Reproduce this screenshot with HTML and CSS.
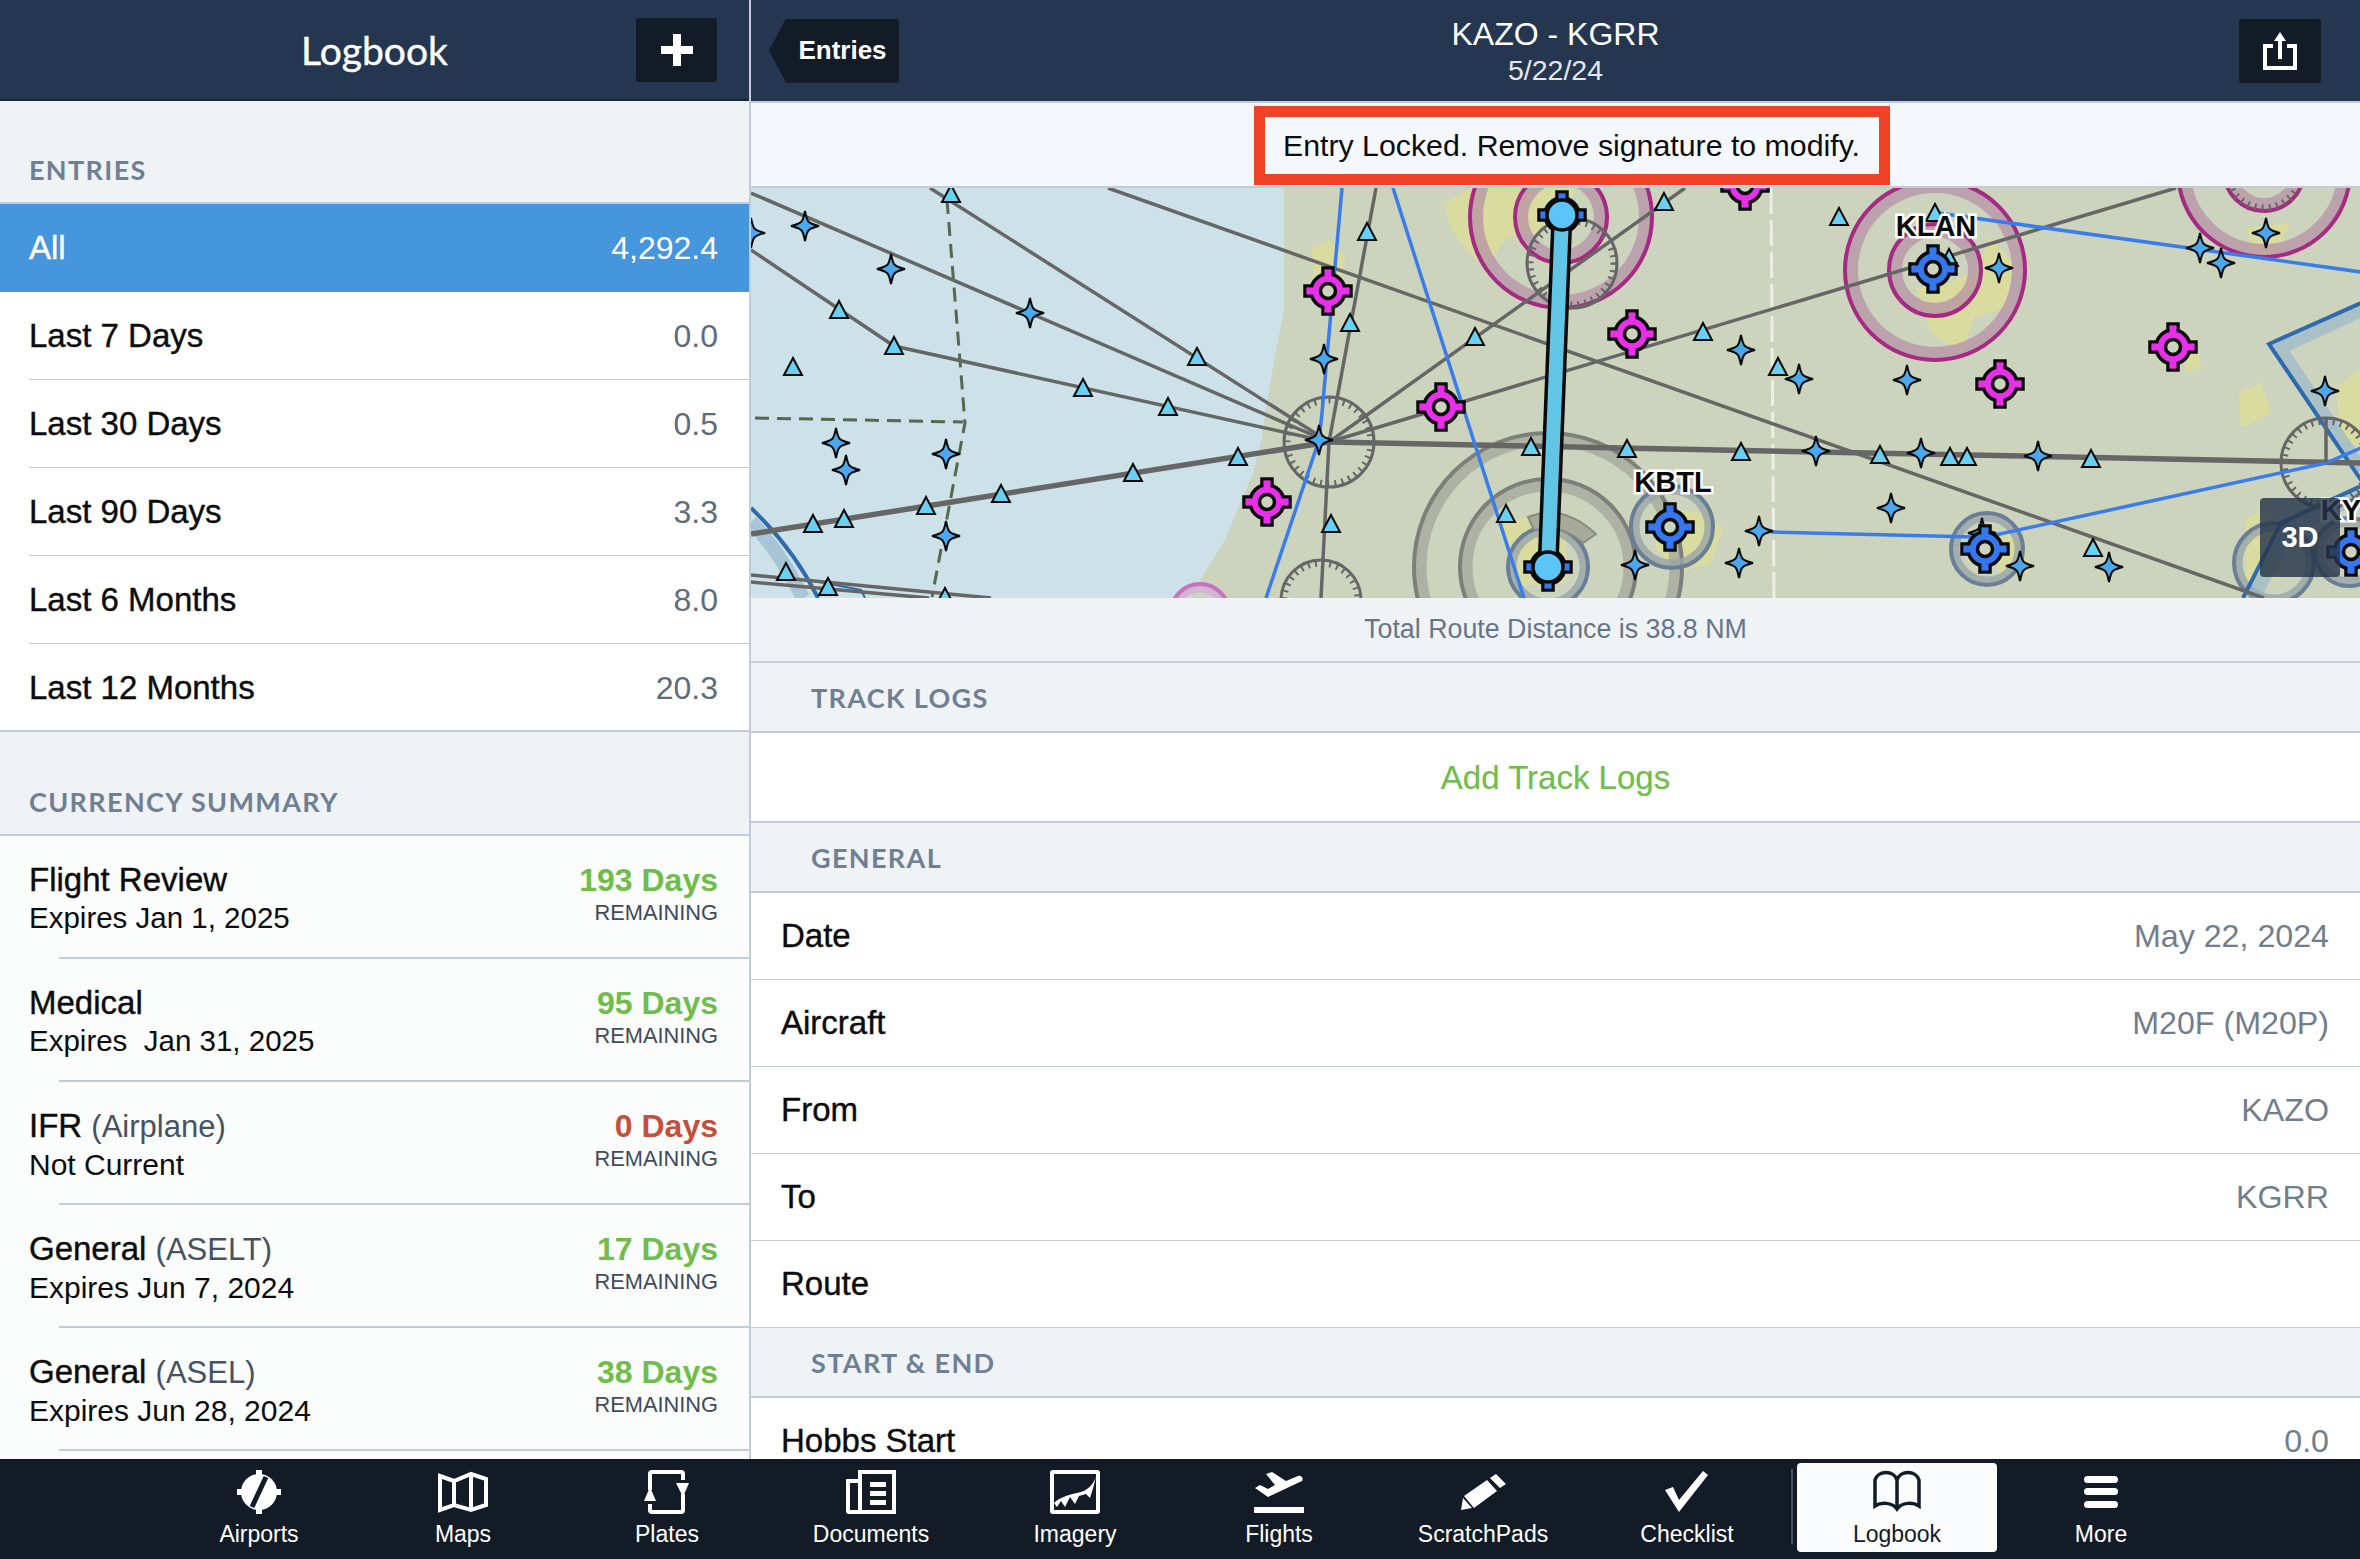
FILE: index.html
```html
<!DOCTYPE html>
<html lang="en">
<head>
  <meta charset="UTF-8">
  <title>Logbook</title>
  <link rel="stylesheet" href="styles.css">
</head>
<body>
<div class="app">
  <div class="main">

    <aside class="sidebar">
      <header class="side-head">
        <h1 class="side-title">Logbook</h1>
        <button class="nav-btn plus-btn">
          <svg width="32" height="32" viewBox="0 0 32 32"><path class="ico-fill" d="M12 0h8v12h12v8H20v12h-8V20H0v-8h12z"/></svg>
        </button>
      </header>
      <div class="side-scroll">
        <div class="section first-section">ENTRIES</div>
        <ul class="entries">
          <li class="entry selected"><span>All</span><span class="entry-val">4,292.4</span></li>
          <li class="entry"><span>Last 7 Days</span><span class="entry-val">0.0</span></li>
          <li class="entry"><span>Last 30 Days</span><span class="entry-val">0.5</span></li>
          <li class="entry"><span>Last 90 Days</span><span class="entry-val">3.3</span></li>
          <li class="entry"><span>Last 6 Months</span><span class="entry-val">8.0</span></li>
          <li class="entry"><span>Last 12 Months</span><span class="entry-val">20.3</span></li>
        </ul>
        <div class="section first-section second-section">CURRENCY SUMMARY</div>
        <ul class="currency">
          <li class="cur">
            <div><div class="cur-name">Flight Review</div><div class="cur-sub tight">Expires Jan 1, 2025</div></div>
            <div class="cur-right"><div class="days ok">193 Days</div><div class="remain">REMAINING</div></div>
          </li>
          <li class="cur">
            <div><div class="cur-name">Medical</div><div class="cur-sub tight">Expires&nbsp; Jan 31, 2025</div></div>
            <div class="cur-right"><div class="days ok">95 Days</div><div class="remain">REMAINING</div></div>
          </li>
          <li class="cur">
            <div><div class="cur-name">IFR <span class="cur-kind">(Airplane)</span></div><div class="cur-sub">Not Current</div></div>
            <div class="cur-right"><div class="days bad">0 Days</div><div class="remain">REMAINING</div></div>
          </li>
          <li class="cur">
            <div><div class="cur-name">General <span class="cur-kind">(ASELT)</span></div><div class="cur-sub">Expires Jun 7, 2024</div></div>
            <div class="cur-right"><div class="days ok">17 Days</div><div class="remain">REMAINING</div></div>
          </li>
          <li class="cur">
            <div><div class="cur-name">General <span class="cur-kind">(ASEL)</span></div><div class="cur-sub">Expires Jun 28, 2024</div></div>
            <div class="cur-right"><div class="days ok">38 Days</div><div class="remain">REMAINING</div></div>
          </li>
        </ul>
      </div>
    </aside>

    <section class="detail">
      <header class="detail-head">
        <div class="head-left"><button class="nav-btn back-btn">Entries</button></div>
        <div class="head-title">
          <div class="route-name">KAZO - KGRR</div>
          <div class="route-date">5/22/24</div>
        </div>
        <div class="head-right">
          <button class="nav-btn share-btn">
            <svg width="34" height="38" viewBox="0 0 34 38"><path class="ico-line" d="M10 14H2v22h30V14h-8"/><path class="ico-line" d="M17 6v21"/><path class="ico-fill" d="M17 0l6 9H11z"/></svg>
          </button>
        </div>
      </header>

      <div class="notice"><div class="notice-box">Entry Locked. Remove signature to modify.</div></div>

      <div class="map">
        <svg class="map-svg" width="1610" height="410" viewBox="0 0 1610 410">
          <defs>
            <path id="star" class="star" d="M0-15Q2-5 4-4Q6-2 14 0Q6 2 4 4Q2 5 0 15Q-2 5-4 4Q-6 2-14 0Q-6-2-4-4Q-2-5 0-15z"/>
            <path id="tri" class="tri" d="M0-9L9 8H-9z"/>
            <g id="apt" class="apt">
              <rect class="apt-edge" x="-5" y="-23" width="10" height="46"/>
              <rect class="apt-edge" x="-23" y="-5" width="46" height="10"/>
              <circle class="apt-edge" r="17"/>
              <rect x="-3.5" y="-21.5" width="7" height="43"/>
              <rect x="-21.5" y="-3.5" width="43" height="7"/>
              <circle class="apt-hole" r="7.5"/>
            </g>
          </defs>

          <rect class="sea" width="1610" height="410"/>
          <path class="land" d="M533 0V119L515 219L510 255L502 285L474 352L449 392L439 410H1610V0z"/>

          <!-- yellow city areas -->
          <path class="city" d="M693 15L720 0H825L815 25L790 45L755 50L735 80L715 62L700 40z"/>
          <path class="city" d="M561 60L578 52L594 70L590 100L572 120L562 90z"/>
          <path class="city" d="M750 335L790 325L815 345L815 395L770 398L758 370z"/>
          <path class="city" d="M1165 100L1200 95L1225 80L1240 50L1262 75L1255 120L1222 130L1212 165L1180 145z"/>
          <path class="city" d="M905 320L950 325L972 340L960 375L925 385L905 360z"/>
          <path class="city" d="M1240 350L1270 345L1278 385L1250 390z"/>
          <path class="city" d="M1495 40L1540 35L1525 65L1505 70z"/>
          <path class="city" d="M1430 155L1445 150L1450 180L1435 185z"/>
          <path class="city" d="M1488 205L1510 195L1520 225L1490 240z"/>
          <path class="city" d="M1585 200L1610 180V260L1590 250z"/>
          <path class="city" d="M1495 330L1520 320L1530 390L1495 395z"/>

          <!-- airspace rings -->
          <circle class="band-c" cx="1184" cy="82" r="83"/><circle class="ring-c" cx="1184" cy="82" r="90"/>
          <circle class="band-c" cx="1184" cy="82" r="39"/><circle class="ring-c" cx="1184" cy="82" r="46"/>
          <circle class="band-c" cx="810" cy="29" r="84"/><circle class="ring-c" cx="810" cy="29" r="91"/>
          <circle class="band-c" cx="810" cy="29" r="39"/><circle class="ring-c" cx="810" cy="29" r="46"/>
          <circle class="band-c" cx="1513" cy="-17" r="79"/><circle class="ring-c" cx="1513" cy="-17" r="86"/>
          <circle class="band-c" cx="1513" cy="-17" r="33"/><circle class="ring-c" cx="1513" cy="-17" r="40"/>
          <circle class="band-d" cx="797" cy="379" r="127"/><circle class="ring-d" cx="797" cy="379" r="134"/>
          <circle class="band-d" cx="797" cy="379" r="81"/><circle class="ring-d" cx="797" cy="379" r="88"/>
          <circle class="band-e" cx="797" cy="379" r="35"/><circle class="ring-e" cx="797" cy="379" r="40"/>
          <circle class="band-e" cx="921" cy="339" r="36"/><circle class="ring-e" cx="921" cy="339" r="41"/>
          <circle class="band-e" cx="1236" cy="361" r="31"/><circle class="ring-e" cx="1236" cy="361" r="36"/>
          <circle class="band-e" cx="1523" cy="375" r="35"/><circle class="ring-e" cx="1523" cy="375" r="40"/>
          <circle class="band-e" cx="1598" cy="364" r="29"/><circle class="ring-e" cx="1598" cy="364" r="34"/>
          <circle class="band-f" cx="449" cy="425" r="24"/><circle class="ring-f" cx="449" cy="425" r="29"/>
          <path class="wedge" d="M777 329Q812 315 845 346L832 355Q810 335 783 342z"/>

          <path class="class-b-band" d="M0 334Q28 362 52 410"/>
          <path class="class-b" d="M0 320Q42 360 67 410"/>
          <path class="class-b-thin" d="M58 392L110 402L114 410"/>
          <path class="class-b-band" d="M1610 122L1528 160L1610 282M1502 410L1538 342L1610 306"/>
          <path class="class-b" d="M1610 115L1518 156L1610 292M1492 410L1530 335L1610 298"/>

          <!-- compass roses -->
          <circle class="rose" cx="578" cy="254" r="45"/><circle class="rose-ticks" cx="578" cy="254" r="42"/>
          <circle class="rose" cx="570" cy="412" r="40"/><circle class="rose-ticks" cx="570" cy="412" r="37"/>
          <circle class="rose" cx="821" cy="75" r="45"/><circle class="rose-ticks" cx="821" cy="75" r="42"/>
          <circle class="rose" cx="1575" cy="275" r="45"/><circle class="rose-ticks" cx="1575" cy="275" r="42"/>
          <circle class="rose-ticks" cx="1513" cy="-17" r="37"/>

          <!-- boundaries -->
          <path class="bound" d="M196 12L214 235L181 409"/>
          <path class="bound" d="M4 230L212 234"/>
          <path class="state" d="M1020 0L1023 410"/>

          <!-- airways -->
          <path class="air" d="M578 254L179 0"/>
          <path class="air" d="M578 254L0 5"/>
          <path class="air" d="M578 254L143 158L0 62"/>
          <path class="air" d="M578 254L625 0"/>
          <path class="air" d="M578 254L934 0"/>
          <path class="air" d="M578 254L1425 0"/>
          <path class="air" d="M578 254L570 410"/>
          <path class="air" d="M357 0L1513 410"/>
          <path class="air" d="M0 387L240 410"/>
          <path class="air" d="M0 394L178 410"/>
          <path class="air-wide" d="M578 254L0 346"/>
          <path class="air-wide" d="M578 254L1610 275"/>

          <!-- low level routes -->
          <path class="vor" d="M591 0L571 225L568 252L515 410"/>
          <path class="vor" d="M642 0L773 410"/>
          <path class="vor" d="M1187 25L1610 84"/>
          <path class="vor" d="M1020 344L1224 349"/>
          <path class="vor" d="M1244 347L1575 275L1610 260"/>
          <path class="air" d="M1575 275V230"/>

          <use href="#tri" x="200" y="6"/><use href="#tri" x="88" y="122"/><use href="#tri" x="143" y="158"/>
          <use href="#tri" x="42" y="179"/><use href="#tri" x="332" y="200"/><use href="#tri" x="417" y="219"/>
          <use href="#tri" x="446" y="169"/><use href="#tri" x="487" y="269"/><use href="#tri" x="382" y="285"/>
          <use href="#tri" x="250" y="306"/><use href="#tri" x="175" y="318"/><use href="#tri" x="93" y="331"/>
          <use href="#tri" x="62" y="336"/><use href="#tri" x="35" y="384"/><use href="#tri" x="77" y="399"/>
          <use href="#tri" x="194" y="409"/><use href="#tri" x="616" y="44"/><use href="#tri" x="599" y="135"/>
          <use href="#tri" x="724" y="149"/><use href="#tri" x="580" y="336"/><use href="#tri" x="780" y="259"/>
          <use href="#tri" x="755" y="326"/><use href="#tri" x="913" y="14"/><use href="#tri" x="1088" y="29"/>
          <use href="#tri" x="1184" y="25"/><use href="#tri" x="1198" y="70"/><use href="#tri" x="952" y="144"/>
          <use href="#tri" x="1027" y="179"/><use href="#tri" x="876" y="261"/><use href="#tri" x="990" y="264"/>
          <use href="#tri" x="1129" y="267"/><use href="#tri" x="1199" y="269"/><use href="#tri" x="1216" y="269"/>
          <use href="#tri" x="1340" y="271"/><use href="#tri" x="1342" y="360"/>

          <use href="#star" x="0" y="45"/><use href="#star" x="54" y="38"/><use href="#star" x="140" y="81"/>
          <use href="#star" x="279" y="125"/><use href="#star" x="573" y="171"/><use href="#star" x="568" y="252"/>
          <use href="#star" x="85" y="255"/><use href="#star" x="95" y="282"/><use href="#star" x="195" y="266"/>
          <use href="#star" x="195" y="348"/><use href="#star" x="990" y="162"/><use href="#star" x="1048" y="191"/>
          <use href="#star" x="1156" y="192"/><use href="#star" x="1248" y="80"/><use href="#star" x="1449" y="60"/>
          <use href="#star" x="1470" y="75"/><use href="#star" x="1515" y="45"/><use href="#star" x="1574" y="203"/>
          <use href="#star" x="1065" y="263"/><use href="#star" x="1170" y="265"/><use href="#star" x="1287" y="268"/>
          <use href="#star" x="1140" y="320"/><use href="#star" x="1008" y="343"/><use href="#star" x="988" y="375"/>
          <use href="#star" x="884" y="377"/><use href="#star" x="1269" y="378"/><use href="#star" x="1358" y="379"/>
          <use href="#star" x="1231" y="345"/>

          <use href="#apt" class="apt-pink" x="577" y="103"/><use href="#apt" class="apt-pink" x="690" y="219"/>
          <use href="#apt" class="apt-pink" x="516" y="314"/><use href="#apt" class="apt-pink" x="881" y="146"/>
          <use href="#apt" class="apt-pink" x="1249" y="196"/><use href="#apt" class="apt-pink" x="1422" y="159"/>
          <use href="#apt" class="apt-pink" x="994" y="-2"/>
          <use href="#apt" class="apt-blue" x="1182" y="81"/><use href="#apt" class="apt-blue" x="919" y="339"/>
          <use href="#apt" class="apt-blue" x="1234" y="361"/><use href="#apt" class="apt-blue" x="1600" y="364"/>
          <use href="#apt" class="apt-blue" x="811" y="27"/><use href="#apt" class="apt-blue" x="797" y="379"/>

          <path class="route-edge" d="M811 27L797 379"/>
          <path class="route-core" d="M811 27L797 379"/>
          <circle class="route-end" cx="811" cy="27" r="15"/>
          <circle class="route-end" cx="797" cy="379" r="15"/>

          <text class="map-label" x="1185" y="48">KLAN</text>
          <text class="map-label" x="922" y="304">KBTL</text>
          <text class="map-label" x="1590" y="332">KY</text>
        </svg>
        <div class="btn-3d">3D</div>
      </div>

      <div class="distance">Total Route Distance is 38.8 NM</div>
      <div class="section detail-section">TRACK LOGS</div>
      <div class="add-row">Add Track Logs</div>
      <div class="section detail-section">GENERAL</div>
      <div class="field"><span>Date</span><span class="field-val">May 22, 2024</span></div>
      <div class="field"><span>Aircraft</span><span class="field-val">M20F (M20P)</span></div>
      <div class="field"><span>From</span><span class="field-val">KAZO</span></div>
      <div class="field"><span>To</span><span class="field-val">KGRR</span></div>
      <div class="field"><span>Route</span></div>
      <div class="section detail-section">START &amp; END</div>
      <div class="field"><span>Hobbs Start</span><span class="field-val">0.0</span></div>
    </section>
  </div>

  <nav class="tabbar">
    <a class="tab">
      <svg class="tab-ico" width="44" height="44" viewBox="0 0 44 44"><path class="ico-fill" d="M19 0h6v7h-6zM19 37h6v7h-6zM0 19h7v6H0zM37 19h7v6h-7z"/><circle class="ico-fill" cx="22" cy="22" r="18"/><path class="ico-slot" d="M29 7L15 37"/></svg>
      <span>Airports</span>
    </a>
    <a class="tab">
      <svg class="tab-ico" width="52" height="44" viewBox="0 0 52 44"><path class="ico-line" d="M3 6L17 11L34 4L49 9V35L34 40L17 35L3 40z"/><path class="ico-line" d="M17 11V35M34 4V40"/></svg>
      <span>Maps</span>
    </a>
    <a class="tab">
      <svg class="tab-ico" width="46" height="44" viewBox="0 0 46 44"><rect class="ico-line" x="6" y="2" width="33" height="40" rx="2"/><path class="ico-gap" d="M39 10V24M6 20V34"/><path class="ico-fill" d="M32 13H45L39 27zM0 31H12L6 17z"/></svg>
      <span>Plates</span>
    </a>
    <a class="tab">
      <svg class="tab-ico" width="50" height="44" viewBox="0 0 50 44"><path class="ico-line" d="M14 42V2H48V42H3Q2 42 2 41V11H14"/><path class="ico-fill" d="M24 12H40V17H24zM24 21H40V26H24zM24 30H40V35H24z"/></svg>
      <span>Documents</span>
    </a>
    <a class="tab">
      <svg class="tab-ico" width="50" height="44" viewBox="0 0 50 44"><rect class="ico-line" x="2" y="2" width="46" height="40" rx="1"/><path class="ico-fill" d="M46 6C44 14 38 21 27 23C17 25 9 28 4 33L7 37L11 31L15 37L20 27L25 34L29 26L36 24L40 28L44 15z"/></svg>
      <span>Imagery</span>
    </a>
    <a class="tab">
      <svg class="tab-ico" width="50" height="44" viewBox="0 0 50 44"><path class="ico-fill" d="M44 6C47 5 50 8 48 11L14 27L1 18L6 15L14 19L21 15L12 4L18 2L32 11zM0 37H50V43H0z"/></svg>
      <span>Flights</span>
    </a>
    <a class="tab">
      <svg class="tab-ico" width="46" height="44" viewBox="0 0 46 44"><path class="ico-fill" d="M1 40L3 28L12 38zM4 26L27 10L37 21L14 38zM30 8L36 4L46 14L40 18z"/></svg>
      <span>ScratchPads</span>
    </a>
    <a class="tab">
      <svg class="tab-ico" width="44" height="44" viewBox="0 0 44 44"><path class="ico-fill" d="M0 20L8 17L14 30L38 1L43 5L14 42z"/></svg>
      <span>Checklist</span>
    </a>
    <div class="tab-sep"></div>
    <a class="tab active">
      <svg class="tab-ico" width="50" height="44" viewBox="0 0 50 44"><path class="book" d="M25 10C22 0 6 0 3 10V36C9 32 20 32 25 39C30 32 41 32 47 36V10C44 0 28 0 25 10V37"/></svg>
      <span>Logbook</span>
    </a>
    <a class="tab">
      <svg class="tab-ico" width="34" height="44" viewBox="0 0 34 44"><rect class="ico-fill" y="6" width="34" height="7" rx="3.5"/><rect class="ico-fill" y="18" width="34" height="7" rx="3.5"/><rect class="ico-fill" y="31" width="34" height="7" rx="3.5"/></svg>
      <span>More</span>
    </a>
  </nav>
</div>
</body>
</html>
```

FILE: styles.css
```css
* { box-sizing: border-box; }
html, body { margin: 0; height: 100%; overflow: hidden; }
body { font-family: "Liberation Sans", Arial, sans-serif; background: #fff; color: #0c0c0c; }
ul { list-style: none; margin: 0; padding: 0; }
button { border: 0; font: inherit; padding: 0; }

.app { width: 2360px; height: 1559px; display: flex; flex-direction: column; }
.main { flex: 1; min-height: 0; display: flex; }

/* left column */
.sidebar { width: 751px; flex: none; display: flex; flex-direction: column; border-right: 2px solid #c2cbd6; background: #eff3f6; overflow: hidden; }
.side-head { height: 101px; flex: none; background: #243650; border-bottom: 2px solid #1a2637; display: flex; align-items: center; justify-content: center; position: relative; }
.side-title { margin: 0; font-size: 39px; font-weight: 400; color: #fff; font-family: "Lato", "Liberation Sans", sans-serif; padding-top: 1px; -webkit-text-stroke: .4px #fff; }
.nav-btn { background: #131b26; height: 64px; border-radius: 3px; color: #fff; display: flex; align-items: center; justify-content: center; }
.plus-btn { position: absolute; left: 636px; top: 18px; width: 81px; }
.ico-fill { fill: #fff; }
.ico-line { fill: none; stroke: #fff; stroke-width: 4; }
.ico-slot { fill: none; stroke: #131b26; stroke-width: 5; }
.ico-gap { fill: none; stroke: #131b26; stroke-width: 5; }
.book { fill: none; stroke: #131b26; stroke-width: 3.5; }

.side-scroll { flex: 1; min-height: 0; overflow: hidden; }
.section { font-family: "Lato", "Liberation Sans", sans-serif; color: #6f7f94; font-size: 27px; font-weight: 700; letter-spacing: 1.35px; }
.first-section { height: 103px; padding: 52px 0 0 29px; border-bottom: 2px solid #c2cbd6; }
.second-section { height: 104px; padding-top: 53px; }

.entry { height: 88px; padding: 0 31px 0 29px; display: flex; align-items: center; justify-content: space-between; background: #fff; font-size: 33px; -webkit-text-stroke: .4px currentColor; position: relative; }
.entry::after { content: ""; position: absolute; left: 29px; right: 0; bottom: 0; height: 1px; background: #c2cbd6; }
.entry:last-child::after { left: 0; height: 2px; }
.entry-val { color: #5f6c7c; -webkit-text-stroke: 0; font-size: 32px; }
.selected { background: #4596dc; color: #fff; }
.selected .entry-val { color: #fff; }
.selected::after { display: none; }

.currency { background: #fbfcfc; padding-bottom: 40px; }
.cur { height: 123px; padding: 25px 31px 0 29px; display: flex; justify-content: space-between; background: #fbfcfc; position: relative; }
.cur::after { content: ""; position: absolute; left: 59px; right: 0; bottom: 0; height: 2px; background: #c2cbd6; }
.cur-name { font-size: 33px; line-height: 38px; -webkit-text-stroke: .4px currentColor; }
.cur-kind { color: #48525f; -webkit-text-stroke: 0; font-size: 31px; }
.cur-sub { font-size: 30px; line-height: 36px; margin-top: 1px; }
.cur-sub.tight { font-size: 29.5px; }
.cur-right { text-align: right; }
.days { font-size: 32px; line-height: 38px; font-weight: 700; }
.ok { color: #70bd4c; }
.bad { color: #c4503c; }
.remain { font-size: 21.8px; line-height: 26px; margin-top: 1px; color: #3f4a5a; }

/* right column */
.detail { flex: 1; min-width: 0; display: flex; flex-direction: column; background: #fff; overflow: hidden; }
.detail-head { height: 101px; flex: none; background: #243650; display: grid; grid-template-columns: 1fr auto 1fr; align-items: center; }
.head-left { padding-left: 18px; }
.head-right { display: flex; justify-content: flex-end; padding-right: 39px; }
.back-btn { width: 130px; padding-left: 17px; font-size: 26px; font-weight: 700; clip-path: polygon(13% 0, 100% 0, 100% 100%, 13% 100%, 0 50%); }
.share-btn { width: 82px; }
.head-title { color: #fff; text-align: center; margin-top: -1px; }
.route-name { font-size: 32px; line-height: 38px; }
.route-date { font-size: 28.5px; line-height: 32px; margin-top: 1px; color: #e4e8ec; }

.notice { height: 87px; flex: none; background: #f4f8fc; border-top: 2px solid #c2cbd6; border-bottom: 2px solid #c2cbd6; display: flex; justify-content: center; padding: 3px 0 0 32px; }
.notice-box { height: 79px; width: 636px; flex: none; border: 11px solid #ee4126; display: flex; align-items: center; justify-content: center; font-size: 30.3px; white-space: nowrap; }

.map { height: 410px; flex: none; position: relative; overflow: hidden; }
.map-svg { display: block; }
.btn-3d { position: absolute; left: 1509px; top: 310px; width: 80px; height: 79px; background: rgba(38, 54, 74, .82); border-radius: 4px; color: #fff; font-size: 29px; font-weight: 700; display: flex; align-items: center; justify-content: center; }

.sea { fill: #cce2e8; }
.land { fill: #ccd4bd; }
.city { fill: #dadc9f; }
.ring-c { fill: none; stroke: #a52a82; stroke-width: 4; }
.band-c { fill: none; stroke: #b68fa5; stroke-width: 12; opacity: .72; }
.ring-d { fill: none; stroke: #7d7f7a; stroke-width: 4; }
.band-d { fill: none; stroke: #a3a79c; stroke-width: 11; opacity: .75; }
.ring-e { fill: none; stroke: #6a7f95; stroke-width: 4; }
.band-e { fill: none; stroke: #98a5a8; stroke-width: 7; opacity: .8; }
.ring-f { fill: none; stroke: #c873bf; stroke-width: 4; }
.band-f { fill: none; stroke: #d3b6d4; stroke-width: 7; }
.wedge { fill: #a7aa9a; stroke: #888c80; stroke-width: 2; }
.class-b { fill: none; stroke: #2f69b0; stroke-width: 4; }
.class-b-thin { fill: none; stroke: #2f69b0; stroke-width: 2; }
.class-b-band { fill: none; stroke: #8fb2cc; stroke-width: 14; opacity: .6; }
.rose { fill: none; stroke: #666; stroke-width: 3; }
.rose-ticks { fill: none; stroke: #666; stroke-width: 7; stroke-dasharray: 2 5.3; }
.bound { fill: none; stroke: #56694f; stroke-width: 3; stroke-dasharray: 14 8; }
.state { fill: none; stroke: #eceee2; stroke-width: 3; stroke-dasharray: 26 6; }
.air { fill: none; stroke: #666; stroke-width: 3.5; }
.air-wide { fill: none; stroke: #666; stroke-width: 5.5; }
.vor { fill: none; stroke: #3b7de8; stroke-width: 3.5; }
.star { fill: #4aa8ef; stroke: #0a0a0a; stroke-width: 2; }
.tri { fill: #68d0f3; stroke: #0a0a0a; stroke-width: 2; }
.apt-edge { stroke: #0a0a0a; stroke-width: 3.5; }
.apt-hole { fill: #ccd4bd; stroke: #0a0a0a; stroke-width: 3.5; }
.apt-pink { fill: #e92fe9; }
.apt-blue { fill: #3477ee; }
.route-edge { fill: none; stroke: #0a0a0a; stroke-width: 21; }
.route-core { fill: none; stroke: #62c5e6; stroke-width: 14; }
.route-end { fill: #5bc4f8; stroke: #0a0a0a; stroke-width: 3.5; }
.map-label { font-size: 29px; font-weight: 700; text-anchor: middle; fill: #0a0a0a; stroke: #fff; stroke-width: 5px; paint-order: stroke; }

.distance { height: 65px; flex: none; background: #eff3f6; border-bottom: 2px solid #c8cfdb; display: flex; align-items: center; justify-content: center; color: #66768a; font-size: 26.8px; }
.detail-section { height: 70px; flex: none; background: #eff3f6; border-bottom: 2px solid #c2cbd6; padding: 18px 0 0 60px; }
.add-row { height: 90px; flex: none; padding-top: 2px; display: flex; align-items: center; justify-content: center; color: #70bd4c; font-size: 33px; border-bottom: 2px solid #c2cbd6; -webkit-text-stroke: .2px currentColor; }
.field { height: 87px; flex: none; padding: 0 31px 0 30px; display: flex; align-items: center; justify-content: space-between; font-size: 33px; -webkit-text-stroke: .4px currentColor; border-bottom: 1px solid #c2cbd6; }
.field-val { color: #717e8e; -webkit-text-stroke: 0; font-size: 32.2px; }

/* bottom tabs */
.tabbar { height: 100px; flex: none; background: #131b26; display: flex; align-items: flex-start; padding: 4px 0 0 157px; }
.tab { width: 204px; height: 89px; flex: none; padding-top: 7px; color: #fff; font-size: 23px; display: flex; flex-direction: column; align-items: center; }
.tab span { line-height: 24px; margin-top: 8px; }
.tab-ico { display: block; }
.tab-sep { width: 2px; height: 75px; margin: 6px 0 0 2px; background: #4a5361; flex: none; }
.tab.active { width: 200px; margin: 0 2px 0 4px; background: #fbfcfd; color: #131b26; border-radius: 4px; }
```
